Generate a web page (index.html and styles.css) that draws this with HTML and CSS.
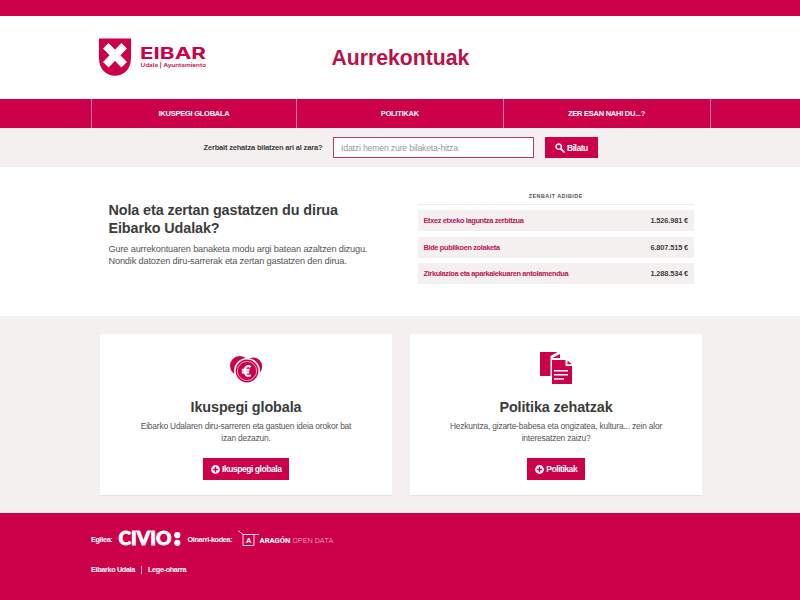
FILE: index.html
```html
<!DOCTYPE html>
<html lang="eu">
<head>
    <meta charset="utf-8">
    <title>Aurrekontuak - Eibarko Udala</title>
    <link rel="stylesheet" href="styles.css">
</head>
<body>

    <div class="topbar"></div>

    <header class="header">
        <div class="container header-inner">
            <svg class="logo" width="112" height="42" viewBox="0 0 112 42">
                <path fill="#cd004a" d="M0 2.5H32V22C32 33 25 39.7 16 39.7S0 33 0 22Z"/>
                <path stroke="#fff" stroke-width="7.8" d="M6.8 9.8L25.2 28.8M25.2 9.8L6.8 28.8"/>
                <text class="logo-name" x="41" y="22.7" textLength="66" lengthAdjust="spacingAndGlyphs">EIBAR</text>
                <text class="logo-sub" x="41.5" y="31" textLength="65.5" lengthAdjust="spacingAndGlyphs">Udala | Ayuntamiento</text>
            </svg>
            <h1 class="title">Aurrekontuak</h1>
        </div>
    </header>

    <nav class="nav">
        <div class="container nav-inner">
            <a class="nav-item">IKUSPEGI GLOBALA</a>
            <a class="nav-item">POLITIKAK</a>
            <a class="nav-item">ZER ESAN NAHI DU...?</a>
        </div>
    </nav>

    <form class="search">
        <label class="search-label" for="q">Zerbait zehatza bilatzen ari al zara?</label>
        <input class="search-input" id="q" type="text" placeholder="Idatzi hemen zure bilaketa-hitza">
        <button class="btn btn-search" type="button">
            <svg width="10" height="10" viewBox="0 0 10 10">
                <circle cx="3.7" cy="3.7" r="2.7" fill="none" stroke="#fff" stroke-width="1.4"/>
                <path d="M5.7 5.7L8.9 8.9" stroke="#fff" stroke-width="1.8" stroke-linecap="round"/>
            </svg>
            <span>Bilatu</span>
        </button>
    </form>

    <section class="intro">
        <div class="intro-text">
            <h2>Nola eta zertan gastatzen du dirua<br>Eibarko Udalak?</h2>
            <p>Gure aurrekontuaren banaketa modu argi batean azaltzen dizugu.<br>Nondik datozen diru-sarrerak eta zertan gastatzen den dirua.</p>
        </div>
        <div class="examples">
            <h3>ZENBAIT ADIBIDE</h3>
            <div class="example"><a>Etxez etxeko laguntza zerbitzua</a><span>1.526.981 €</span></div>
            <div class="example"><a>Bide publikoen zolaketa</a><span>6.807.515 €</span></div>
            <div class="example"><a>Zirkulazioa eta aparkalekuaren antolamendua</a><span>1.288.534 €</span></div>
        </div>
    </section>

    <section class="cards">
        <div class="card">
            <svg class="card-icon" width="34" height="34" viewBox="0 0 34 34">
                <circle cx="10.8" cy="14.8" r="9.8" fill="#cd004a"/>
                <circle cx="24" cy="15.6" r="9.2" fill="#cd004a"/>
                <circle cx="18" cy="20" r="13" fill="#fff"/>
                <circle cx="18" cy="20" r="11.4" fill="#cd004a"/>
                <circle cx="18" cy="20" r="9.6" fill="none" stroke="#fff" stroke-opacity=".8" stroke-width=".8"/>
                <path d="M21.8 15.9C18.5 14 15.6 16 15.6 20S18.5 26 21.8 24.1M12.8 18.7H20.6M12.8 21.4H20.2" fill="none" stroke="#fff" stroke-width="2.1"/>
            </svg>
            <h2>Ikuspegi globala</h2>
            <p>Eibarko Udalaren diru-sarreren eta gastuen ideia orokor bat<br>izan dezazun.</p>
            <a class="btn">
                <svg width="9" height="9" viewBox="0 0 9 9">
                    <circle cx="4.5" cy="4.5" r="4.4" fill="#fff"/>
                    <path d="M4.5 1.8V7.2M1.8 4.5H7.2" stroke="#cd004a" stroke-width="1.3"/>
                </svg>
                <span>Ikuspegi globala</span>
            </a>
        </div>
        <div class="card">
            <svg class="card-icon" width="34" height="34" viewBox="0 0 34 34">
                <path fill="#cd004a" d="M1 1H18.5L11.5 5V25H1Z"/>
                <path fill="#cd004a" d="M13.5 7L21 3V7Z"/>
                <path fill="#cd004a" d="M13 9H26.5V15H33V33H13Z"/>
                <path fill="#cd004a" d="M28.5 9.5L32.8 13.3H28.5Z"/>
                <path stroke="#fff" stroke-width="1.5" d="M15 19.7H29M15 23.8H29M15 28H25"/>
            </svg>
            <h2>Politika zehatzak</h2>
            <p>Hezkuntza, gizarte-babesa eta ongizatea, kultura... zein alor<br>interesatzen zaizu?</p>
            <a class="btn">
                <svg width="9" height="9" viewBox="0 0 9 9">
                    <circle cx="4.5" cy="4.5" r="4.4" fill="#fff"/>
                    <path d="M4.5 1.8V7.2M1.8 4.5H7.2" stroke="#cd004a" stroke-width="1.3"/>
                </svg>
                <span>Politikak</span>
            </a>
        </div>
    </section>

    <footer class="footer">
        <div class="container">
            <div class="credits">
                <span>Egilea:</span>
                <svg class="civio" width="64" height="26" viewBox="0 0 64 26">
                    <text class="civio-name" x="0.5" y="19.4" textLength="53" lengthAdjust="spacingAndGlyphs">CIVIO</text>
                    <circle cx="59.3" cy="9.2" r="3.1" fill="#fff"/>
                    <circle cx="59.3" cy="16.8" r="3.1" fill="#fff"/>
                </svg>
                <span>Oinarri-kodea:</span>
                <svg class="aragon" width="97" height="18" viewBox="0 0 97 18">
                    <path d="M0 .5L5 4.5H21M5 4.5V15.5H16V4.5" fill="none" stroke="#fff" stroke-opacity=".85" stroke-width="1"/>
                    <text class="aragon-a" x="7.9" y="12.9">A</text>
                    <text class="aragon-bold" x="21.5" y="12.6" textLength="31" lengthAdjust="spacingAndGlyphs">ARAGÓN</text>
                    <text class="aragon-light" x="54.5" y="12.6" textLength="41" lengthAdjust="spacingAndGlyphs">OPEN DATA</text>
                </svg>
            </div>
            <div class="links">
                <a>Eibarko Udala</a>
                <a>Lege-oharra</a>
            </div>
        </div>
    </footer>

</body>
</html>
```

FILE: styles.css
```css
* {
    box-sizing: border-box;
}

body {
    margin: 0;
    height: 600px;
    overflow: hidden;
    display: flex;
    flex-direction: column;
    background-color: #fff;
    color: #3c3c3c;
    font-family: "Liberation Sans", Arial, sans-serif;
}

h1, h2, h3, p {
    margin: 0;
}

svg {
    display: block;
    flex-shrink: 0;
}

.container {
    width: 620px;
    margin-left: 91px;
}

.topbar {
    height: 16px;
    background-color: #cd004a;
}

.header {
    height: 83px;
}

.header-inner {
    display: flex;
    padding-top: 20px;
    padding-left: 8px;
}

.logo-name {
    font-family: Inter, sans-serif;
    font-size: 16.5px;
    font-weight: bold;
    fill: #cd004a;
}

.logo-sub {
    font-family: Inter, sans-serif;
    font-size: 5.3px;
    font-weight: 600;
    fill: #b9104a;
}

.title {
    margin-left: 120.5px;
    padding-top: 9px;
    font-size: 21.2px;
    line-height: 26px;
    color: #b9104a;
}

.nav {
    height: 29px;
    background-color: #cd004a;
    flex-shrink: 0;
}

.nav-inner {
    display: flex;
    height: 100%;
    border-left: 1px solid #e0779d;
}

.nav-item {
    width: 206.5px;
    display: flex;
    align-items: center;
    justify-content: center;
    border-right: 1px solid #e0779d;
    color: #fff;
    font-size: 7.5px;
    font-weight: bold;
    letter-spacing: -0.25px;
}

.nav-item:first-child {
    width: 205px;
}

.nav-item:last-child {
    width: 207px;
}

.search {
    height: 39px;
    display: flex;
    align-items: center;
    padding-left: 203.5px;
    background-color: #f4f0ef;
    flex-shrink: 0;
}

.search-label {
    width: 129.5px;
    font-size: 7.5px;
    font-weight: bold;
    letter-spacing: -0.18px;
}

.search-input {
    width: 201px;
    height: 21px;
    padding: 0 7px;
    border: 1px solid #b03a70;
    background-color: #fff;
    font-family: inherit;
    font-size: 8.7px;
    letter-spacing: -0.18px;
}

.search-input::placeholder {
    color: #999;
}

.btn {
    display: inline-flex;
    align-items: center;
    gap: 2.5px;
    height: 21.5px;
    padding: 0 8px;
    border: 0;
    background-color: #cd004a;
    color: #fff;
    font-family: inherit;
    font-size: 8.6px;
    font-weight: bold;
    letter-spacing: -0.5px;
    white-space: nowrap;
}

.btn-search {
    margin-left: 10.5px;
    width: 53.5px;
    height: 21px;
    padding: 0 0 0 10px;
}

.intro {
    height: 149.4px;
    display: flex;
    padding-left: 108.5px;
    flex-shrink: 0;
}

.intro-text {
    width: 309.5px;
    padding-top: 33.5px;
}

.intro-text h2 {
    font-size: 14.4px;
    line-height: 18px;
    letter-spacing: -0.12px;
}

.intro-text p {
    margin-top: 6px;
    font-size: 9.2px;
    line-height: 12.5px;
    letter-spacing: -0.16px;
    color: #555;
}

.examples {
    width: 275.5px;
    padding-top: 23px;
}

.examples h3 {
    height: 14.5px;
    border-bottom: 1px solid #eeebeb;
    text-align: center;
    font-size: 5.4px;
    font-weight: bold;
    line-height: 13px;
    letter-spacing: 0.48px;
    color: #555;
}

.example {
    display: flex;
    align-items: center;
    justify-content: space-between;
    height: 21px;
    margin-top: 5.6px;
    padding: 0 5.5px;
    background-color: #f4f0ef;
    font-size: 7.4px;
    font-weight: bold;
    letter-spacing: -0.14px;
}

.example a {
    color: #b9165a;
    letter-spacing: -0.35px;
}

.cards {
    height: 197px;
    display: flex;
    gap: 18px;
    padding: 18px 0 0 100px;
    background-color: #f4f0ef;
    flex-shrink: 0;
}

.card {
    display: flex;
    flex-direction: column;
    align-items: center;
    width: 292px;
    height: 161px;
    padding-top: 16.5px;
    background-color: #fff;
    box-shadow: 0 1px 1px #e8e3e3;
    text-align: center;
}

.card h2 {
    margin-top: 12px;
    font-size: 14.4px;
    line-height: 20px;
    letter-spacing: -0.12px;
}

.card p {
    margin: 3px 0 14.5px;
    font-size: 8.4px;
    line-height: 12px;
    letter-spacing: -0.18px;
    color: #555;
}

.footer {
    flex: 1;
    background-color: #cd004a;
    color: #fff;
    font-size: 7.3px;
    font-weight: bold;
    letter-spacing: -0.36px;
}

.credits {
    display: flex;
    align-items: center;
    padding-top: 13px;
}

.civio {
    margin: 0 5.5px;
}

.aragon {
    margin-left: 6px;
}

.civio-name {
    font-family: Lato, sans-serif;
    font-size: 18.6px;
    font-weight: 900;
    letter-spacing: 0;
    fill: #fff;
    stroke: #fff;
    stroke-width: 0.8px;
}

.aragon-a,
.aragon-bold,
.aragon-light {
    font-family: Roboto, sans-serif;
    font-size: 8px;
    letter-spacing: 0;
    fill: #fff;
}

.aragon-light {
    font-weight: 300;
    fill: #f3bdd0;
}

.links {
    display: flex;
    margin-top: 13.5px;
    line-height: 8px;
}

.links a + a {
    margin-left: 6px;
    padding-left: 6px;
    border-left: 1px solid #f3bdd0;
}
```
